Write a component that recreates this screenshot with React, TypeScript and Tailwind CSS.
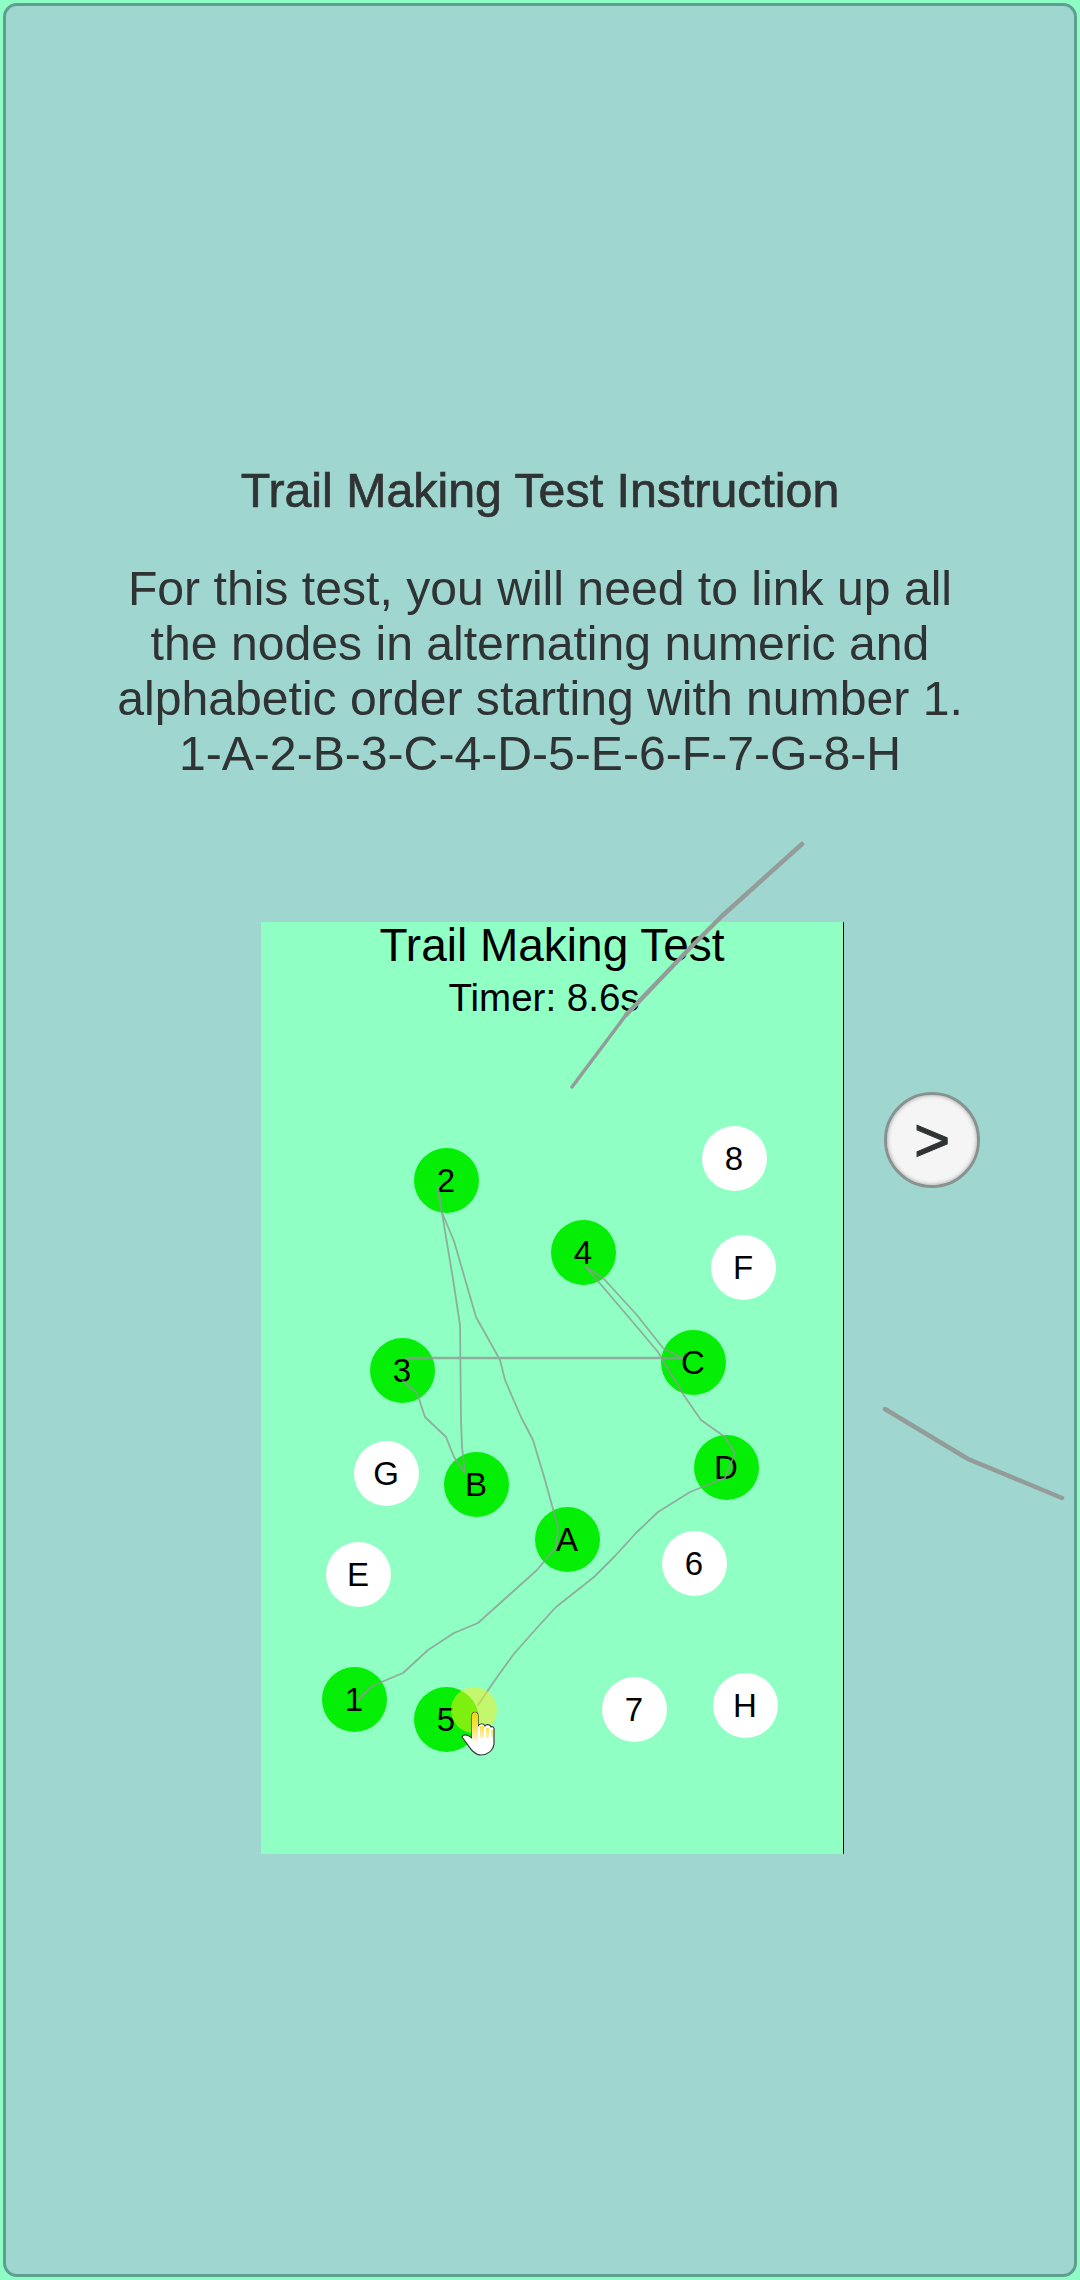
const nodes = [
  { t: "2", x: 446, y: 1180, g: true },
  { t: "8", x: 734, y: 1158, g: false },
  { t: "4", x: 583, y: 1252, g: true },
  { t: "F", x: 743, y: 1267, g: false },
  { t: "3", x: 402, y: 1370, g: true },
  { t: "C", x: 693, y: 1362, g: true },
  { t: "G", x: 386, y: 1473, g: false },
  { t: "B", x: 476, y: 1484, g: true },
  { t: "D", x: 726, y: 1467, g: true },
  { t: "A", x: 567, y: 1539, g: true },
  { t: "6", x: 694, y: 1563, g: false },
  { t: "E", x: 358, y: 1574, g: false },
  { t: "1", x: 354, y: 1699, g: true },
  { t: "5", x: 446, y: 1719, g: true },
  { t: "7", x: 634, y: 1709, g: false },
  { t: "H", x: 745, y: 1705, g: false },
];

const FRAME_X = 261;
const FRAME_Y = 922;

export default function App() {
  return (
    <div className="relative h-[2280px] w-[1080px] overflow-hidden bg-[#8dfdc4] p-[3px] font-['Liberation_Sans',sans-serif]">
      <div className="flex h-full w-full flex-col items-center rounded-[14px] border-[3px] border-[#5f9f93] bg-[#9fd6cf] pt-[456px] text-[#2f3333]">
        <h1 className="text-center text-[48.3px] leading-[56px] font-normal [-webkit-text-stroke:0.7px_#2f3333]">
          Trail Making Test Instruction
        </h1>
        <p className="mt-[43px] w-[900px] text-center text-[48.15px] leading-[55px]">
          For this test, you will need to link up all
          <br />
          the nodes in alternating numeric and
          <br />
          alphabetic order starting with number 1.
          <br />
          1-A-2-B-3-C-4-D-5-E-6-F-7-G-8-H
        </p>
        <div className="mt-[141px] flex w-full items-start gap-[40px] pl-[255px]">
          <div className="relative h-[932px] w-[583px] shrink-0 border-r border-black bg-[#90ffc3] text-black">
            <div className="flex w-[582px] flex-col items-center">
              <div className="text-[46px] leading-[46px]">Trail Making Test</div>
              <div className="mt-[7px] -translate-x-[8px] text-[38.5px] leading-[46px]">Timer: 8.6s</div>
            </div>
            {nodes.map((n) => (
              <div
                key={n.t}
                className={`absolute flex h-[65px] w-[65px] items-center justify-center rounded-full text-[33px] leading-none ${n.g ? "bg-[#05ee05]" : "bg-white"}`}
                style={{ left: n.x - FRAME_X - 32.5, top: n.y - FRAME_Y - 32.5 }}
              >
                {n.t}
              </div>
            ))}
          </div>
          <button className="mt-[170px] flex h-[96px] w-[96px] shrink-0 items-center justify-center rounded-full border-[3px] border-[#8a9290] bg-[#f5f5f5] text-[62px] leading-none text-[#2f3333] shadow-[inset_0_0_4px_#9aa09e] [-webkit-text-stroke:1px_#2f3333]">
            &gt;
          </button>
        </div>
      </div>

      {/* pen strokes drawn over the instruction page */}
      <svg className="pointer-events-none absolute top-0 left-0" width="1080" height="2280" fill="none" strokeLinecap="round" strokeLinejoin="round">
        <defs>
          <linearGradient id="finger" x1="0" y1="1712" x2="0" y2="1745" gradientUnits="userSpaceOnUse">
            <stop offset="0" stopColor="#f5d20a" />
            <stop offset="0.5" stopColor="#f9e45a" />
            <stop offset="1" stopColor="#ffffff" />
          </linearGradient>
        </defs>
        <g stroke="#8f9a96" strokeWidth="1.8" opacity="0.8">
          <path d="M358 1700 L372 1686 L403 1673 L428 1650 L454 1633 L478 1623 L508 1596 L537 1570 L556 1547" />
          <path d="M556 1547 L558 1527 L545 1480 L533 1440 L521 1417 L505 1380 L500 1360 L476 1317 L454 1241 L441 1210 L438 1187" />
          <path d="M438 1187 L441 1207 L453 1279 L460 1325 L461 1420 L462 1447 L465 1473 L454 1457 L446 1437 L425 1417 L417 1393 L403 1381" />
          <path d="M406 1358 L682 1358" strokeWidth="2.4" />
          <path d="M682 1358 L663 1348 L636 1314 L604 1279 L585 1266 L626 1314 L658 1352 L685 1397 L701 1420 L725 1437 L735 1453 L725 1478" />
          <path d="M725 1478 L690 1492 L658 1512 L636 1533 L615 1556 L594 1577 L556 1607 L535 1630 L513 1655 L495 1680 L478 1705" />
        </g>
        <path d="M802 844 L722 916 L690 948 L626 1015" stroke="#949c9a" strokeWidth="4.5" />
        <path d="M626 1015 L572 1087" stroke="#949c9a" strokeWidth="3.5" />
        <path d="M885 1409 L968 1459 L1062 1498" stroke="#949c9a" strokeWidth="4.5" />
        <circle cx="474" cy="1710" r="23" fill="#f5f21a" fillOpacity="0.5" />
        {/* hand cursor */}
        <path
          d="M472 1716 C472 1711 478 1711 478 1716 L478 1726 C480 1723 484 1723 485 1726 C486 1724 490 1724 491 1727 C492 1726 495 1727 494 1731 L494 1744 C493 1751 487 1755 481 1755 C474 1755 470 1748 465 1741 L462 1737 C463 1734 467 1734 472 1738 Z"
          fill="#ffffff"
          stroke="#3a3a3a"
          strokeWidth="1.2"
        />
        <path d="M472 1716 C472 1711 478 1711 478 1716 L478 1744 L472 1741 Z M480 1726 L484 1726 L484 1738 L480 1738 Z M486 1728 L489 1728 L489 1738 L486 1738 Z M491 1730 L493 1730 L493 1738 L491 1738 Z" fill="url(#finger)" />
      </svg>
    </div>
  );
}
